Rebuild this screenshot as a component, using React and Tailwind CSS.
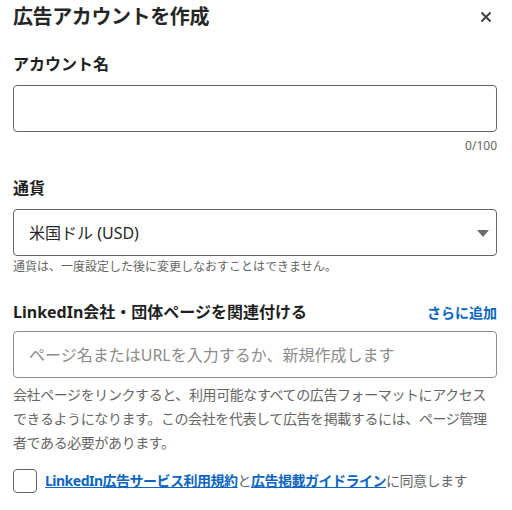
import React, { useState } from "react";

const font = { fontFamily: '"Noto Sans", "Noto Sans CJK JP", sans-serif' };

function Label({ children }) {
  return <div className="text-[16px] font-bold leading-[24px] text-[#1f1f1f]">{children}</div>;
}

export default function App() {
  const [name, setName] = useState("");
  const [agreed, setAgreed] = useState(false);

  return (
    <div style={font} className="w-[512px] h-[510px] bg-white pl-[13px] pr-[15px] text-[#1f1f1f] overflow-hidden">
      <div className="flex items-center justify-between pt-[3px]">
        <h1 className="text-[20px] font-bold leading-[28px] tracking-[-0.4px] text-[#262626]">広告アカウントを作成</h1>
        <button className="mr-[3px] flex h-[16px] w-[16px] items-center justify-center text-[#404040]">
          <svg width="12" height="12" viewBox="0 0 12 12">
            <path d="M1.5 1.5 L10.5 10.5 M10.5 1.5 L1.5 10.5" stroke="currentColor" strokeWidth="2" />
          </svg>
        </button>
      </div>

      <div className="mt-[21px]">
        <Label>アカウント名</Label>
      </div>
      <input
        value={name}
        onChange={(event) => setName(event.target.value)}
        className="mt-[9px] block h-[47px] w-full rounded-[4px] border border-[#666] px-[15px] text-[16px] outline-none"
      />
      <div className="mt-[6px] text-right text-[12px] leading-[16px] text-[#666]">0/100</div>

      <div className="mt-[22px]">
        <Label>通貨</Label>
      </div>
      <div className="relative mt-[9px] flex h-[47px] items-center rounded-[4px] border border-[#666] pl-[15px] text-[16px] text-[#262626]">
        米国ドル (USD)
        <svg className="absolute right-[7px] top-[20px]" width="12" height="7" viewBox="0 0 12 7">
          <path d="M0 0 L12 0 L6 7 Z" fill="#6b6b6b" />
        </svg>
      </div>
      <div className="mt-[3px] text-[12px] leading-[16px] text-[#666]">
        通貨は、一度設定した後に変更しなおすことはできません。
      </div>

      <div className="mt-[25px] flex items-center justify-between">
        <Label>LinkedIn会社・団体ページを関連付ける</Label>
        <a className="mt-[2px] text-[14px] font-bold leading-[20px] text-[#0a66c2]">さらに追加</a>
      </div>
      <div className="mt-[7px] flex h-[47px] items-center rounded-[4px] border border-[#8c8c8c] pl-[15px] text-[16px] text-[#8c8c8c]">
        ページ名またはURLを入力するか、新規作成します
      </div>
      <p className="mt-[5px] text-[14px] leading-[24px] tracking-[-0.4px] text-[#666]">
        会社ページをリンクすると、利用可能なすべての広告フォーマットにアクセス
        <br />
        できるようになります。この会社を代表して広告を掲載するには、ページ管理
        <br />
        者である必要があります。
      </p>

      <label className="mt-[14px] flex items-center gap-[8px]">
        <span
          onClick={() => setAgreed(!agreed)}
          className="h-[24px] w-[24px] shrink-0 rounded-[4px] border border-[#666]"
        />
        <span className="text-[14px] leading-[24px] tracking-[-0.5px] text-[#666]">
          <a className="font-bold text-[#0a66c2] underline">LinkedIn広告サービス利用規約</a>と
          <a className="font-bold text-[#0a66c2] underline">広告掲載ガイドライン</a>に同意します
        </span>
      </label>
    </div>
  );
}
